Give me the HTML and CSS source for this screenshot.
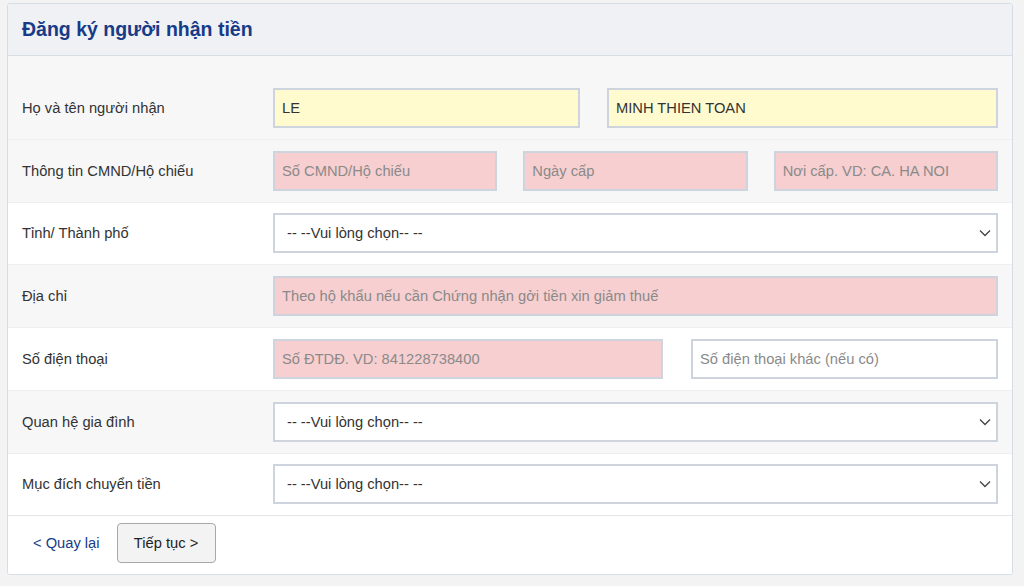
FILE: index.html
```html
<!DOCTYPE html>
<html lang="vi">
<head>
    <meta charset="UTF-8">
    <meta name="viewport" content="width=device-width, initial-scale=1.0">
    <title>Đăng ký người nhận tiền</title>
    <link rel="stylesheet" href="styles.css">
</head>
<body>
    <div class="panel">
        <div class="panel-head">
            <h1>Đăng ký người nhận tiền</h1>
        </div>

        <div class="panel-body">
            <div class="row alt">
                <label>Họ và tên người nhận</label>
                <div class="fields two-a">
                    <input type="text" class="filled" value="LE">
                    <input type="text" class="filled" value="MINH THIEN TOAN">
                </div>
            </div>

            <div class="row alt">
                <label>Thông tin CMND/Hộ chiếu</label>
                <div class="fields three">
                    <input type="text" class="required" placeholder="Số CMND/Hộ chiếu">
                    <input type="text" class="required" placeholder="Ngày cấp">
                    <input type="text" class="required" placeholder="Nơi cấp. VD: CA. HA NOI">
                </div>
            </div>

            <div class="row">
                <label>Tỉnh/ Thành phố</label>
                <div class="fields">
                    <div class="select-wrap">
                        <select><option>-- --Vui lòng chọn-- --</option></select>
                        <svg class="chev" width="12" height="8" viewBox="0 0 12 8"><path d="M1 1.5 L6 6.5 L11 1.5" fill="none" stroke="#444" stroke-width="1.3"/></svg>
                    </div>
                </div>
            </div>

            <div class="row alt">
                <label>Địa chỉ</label>
                <div class="fields">
                    <input type="text" class="required" placeholder="Theo hộ khẩu nếu cần Chứng nhận gởi tiền xin giảm thuế">
                </div>
            </div>

            <div class="row">
                <label>Số điện thoại</label>
                <div class="fields two-b">
                    <input type="text" class="required" placeholder="Số ĐTDĐ. VD: 841228738400">
                    <input type="text" placeholder="Số điện thoại khác (nếu có)">
                </div>
            </div>

            <div class="row alt">
                <label>Quan hệ gia đình</label>
                <div class="fields">
                    <div class="select-wrap">
                        <select><option>-- --Vui lòng chọn-- --</option></select>
                        <svg class="chev" width="12" height="8" viewBox="0 0 12 8"><path d="M1 1.5 L6 6.5 L11 1.5" fill="none" stroke="#444" stroke-width="1.3"/></svg>
                    </div>
                </div>
            </div>

            <div class="row">
                <label>Mục đích chuyển tiền</label>
                <div class="fields">
                    <div class="select-wrap">
                        <select><option>-- --Vui lòng chọn-- --</option></select>
                        <svg class="chev" width="12" height="8" viewBox="0 0 12 8"><path d="M1 1.5 L6 6.5 L11 1.5" fill="none" stroke="#444" stroke-width="1.3"/></svg>
                    </div>
                </div>
            </div>
        </div>

        <div class="panel-foot">
            <a href="#" class="back">&lt; Quay lại</a>
            <button type="button">Tiếp tục &gt;</button>
        </div>
    </div>
</body>
</html>
```

FILE: styles.css
```css
body {
    margin: 0;
    padding: 3px 11px 13px 7px;
    background: #f3f3f4;
    font-family: "Liberation Sans", Arial, sans-serif;
    color: #333;
}
.panel {
    border: 1px solid #d6dde6;
    border-radius: 3px;
    background: #fff;
    overflow: hidden;
}
.panel-head {
    height: 51px;
    background: #eff1f4;
    border-bottom: 1px solid #d8dee6;
    display: flex;
    align-items: center;
    padding: 0 14px;
}
h1 {
    margin: 0;
    font-size: 19.5px;
    font-weight: bold;
    color: #183b88;
}
.panel-body {
    padding-top: 21px;
    background: #f7f7f8;
}
.row {
    height: 62.75px;
    box-sizing: border-box;
    display: flex;
    align-items: center;
    padding: 0 14px;
    border-bottom: 1px solid #efefef;
    background: #fff;
}
.row.alt {
    background: #f7f7f8;
}
.row:last-child {
    border-bottom: 1px solid #e6e6e6;
}
.row label {
    width: 251px;
    flex-shrink: 0;
    font-size: 14.7px;
    color: #333;
}
.fields {
    flex: 1;
    display: grid;
    grid-template-columns: 1fr;
}
.fields.two-a {
    grid-template-columns: 307fr 391fr;
    column-gap: 27px;
}
.fields.two-b {
    grid-template-columns: 390fr 307fr;
    column-gap: 28px;
}
.fields.three {
    grid-template-columns: 1fr 1fr 1fr;
    column-gap: 26px;
}
input, select {
    box-sizing: border-box;
    width: 100%;
    height: 40px;
    border: 2px solid #cdd4de;
    border-radius: 0;
    background: #fff;
    font-family: "Liberation Sans", Arial, sans-serif;
    font-size: 14.7px;
    color: #333;
    padding: 0 7px;
    outline: none;
}
input::placeholder {
    color: #8a8a8a;
}
input.filled {
    background: #fffbcf;
}
input.required {
    background: #f7cfd0;
}
.select-wrap {
    position: relative;
}
select {
    appearance: none;
    -webkit-appearance: none;
    padding: 0 12px;
    color: #333;
}
.chev {
    position: absolute;
    right: 7px;
    top: 16px;
    pointer-events: none;
}
.panel-foot {
    display: flex;
    align-items: center;
    gap: 17px;
    padding: 7px 14px 11px 25px;
    background: #fff;
}
.back {
    color: #183b88;
    text-decoration: none;
    font-size: 14.7px;
}
button {
    width: 99px;
    height: 40px;
    border: 1px solid #a8a8a8;
    border-radius: 4px;
    background: #f3f3f3;
    font-family: "Liberation Sans", Arial, sans-serif;
    font-size: 14.7px;
    color: #222;
    cursor: pointer;
}
```
